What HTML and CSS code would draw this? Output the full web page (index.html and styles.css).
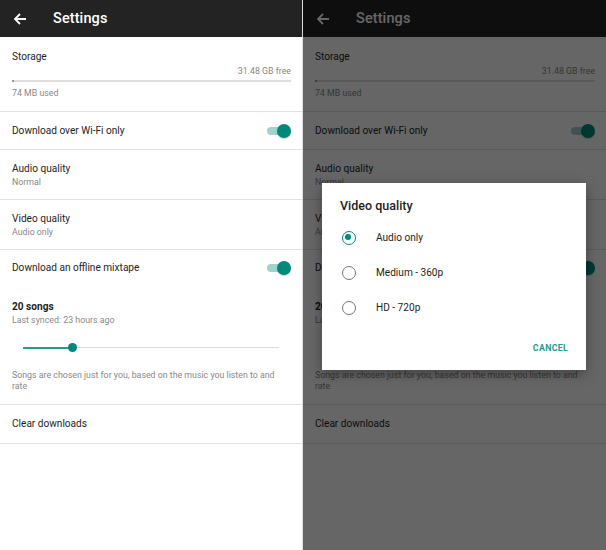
FILE: index.html
```html
<!DOCTYPE html>
<html>
<head>
<meta charset="utf-8">
<link rel="stylesheet" href="styles.css">
</head>
<body>
<div class="screens">
  <div class="phone phone-left">
    <div class="appbar">
      <svg class="back" width="16" height="16" viewBox="0 0 16 16"><path d="M14 8H3M8 3L3 8l5 5" fill="none" stroke="#fff" stroke-width="1.8"/></svg>
      <span class="appbar-title">Settings</span>
    </div>
    <div class="storage">
      <div class="title">Storage</div>
      <div class="free">31.48 GB free</div>
      <div class="bar"><div class="bar-fill"></div></div>
      <div class="sub">74 MB used</div>
    </div>
    <div class="row switch-row"><span class="title">Download over Wi-Fi only</span><span class="toggle"><span class="knob"></span></span></div>
    <div class="row two-line"><div class="title">Audio quality</div><div class="sub">Normal</div></div>
    <div class="row two-line"><div class="title">Video quality</div><div class="sub">Audio only</div></div>
    <div class="mixtape">
      <div class="switch-line"><span class="title">Download an offline mixtape</span><span class="toggle"><span class="knob"></span></span></div>
      <div class="songs">20 songs</div>
      <div class="sub">Last synced: 23 hours ago</div>
      <div class="slider"><div class="slider-fill"></div><div class="slider-thumb"></div></div>
      <div class="desc">Songs are chosen just for you, based on the music you listen to and rate</div>
    </div>
    <div class="row clear-row"><span class="title">Clear downloads</span></div>
  </div>
  <div class="phone phone-right">
    <div class="appbar">
      <svg class="back" width="16" height="16" viewBox="0 0 16 16"><path d="M14 8H3M8 3L3 8l5 5" fill="none" stroke="#fff" stroke-width="1.8"/></svg>
      <span class="appbar-title">Settings</span>
    </div>
    <div class="storage">
      <div class="title">Storage</div>
      <div class="free">31.48 GB free</div>
      <div class="bar"><div class="bar-fill"></div></div>
      <div class="sub">74 MB used</div>
    </div>
    <div class="row switch-row"><span class="title">Download over Wi-Fi only</span><span class="toggle"><span class="knob"></span></span></div>
    <div class="row two-line"><div class="title">Audio quality</div><div class="sub">Normal</div></div>
    <div class="row two-line"><div class="title">Video quality</div><div class="sub">Audio only</div></div>
    <div class="mixtape">
      <div class="switch-line"><span class="title">Download an offline mixtape</span><span class="toggle"><span class="knob"></span></span></div>
      <div class="songs">20 songs</div>
      <div class="sub">Last synced: 23 hours ago</div>
      <div class="slider"><div class="slider-fill"></div><div class="slider-thumb"></div></div>
      <div class="desc">Songs are chosen just for you, based on the music you listen to and rate</div>
    </div>
    <div class="row clear-row"><span class="title">Clear downloads</span></div>
    <div class="scrim"></div>
    <div class="dialog">
      <div class="dialog-title">Video quality</div>
      <div class="option"><span class="radio radio-on"></span><span>Audio only</span></div>
      <div class="option"><span class="radio"></span><span>Medium - 360p</span></div>
      <div class="option"><span class="radio"></span><span>HD - 720p</span></div>
      <div class="actions"><span class="cancel">CANCEL</span></div>
    </div>
  </div>
</div>
</body>
</html>
```
FILE: styles.css
```css
* { box-sizing: border-box; margin: 0; padding: 0; }
html, body { width: 606px; height: 550px; overflow: hidden; }
body { font-family: Roboto, "Noto Sans", sans-serif; background: #fff; color: #212121; }
.screens { display: flex; width: 606px; height: 550px; }
.phone { position: relative; width: 303px; height: 550px; background: #fff; overflow: hidden; }
.phone-left { border-right: 1px solid #dcdcdc; }
.appbar { height: 37px; background: #232323; display: flex; align-items: center; padding-left: 12px; }
.back { display: block; }
.appbar-title { color: #fff; font-size: 14.5px; font-weight: 500; margin-left: 25px; letter-spacing: 0.1px; }
.title { font-size: 10.1px; line-height: 14px; color: #1e1e1e; }
.sub { font-size: 8.8px; line-height: 12px; color: #888; }
.storage { padding: 13px 11px 11px 12px; border-bottom: 1px solid #e2e2e2; height: 75px; }
.free { font-size: 8.8px; line-height: 12px; color: #888; text-align: right; margin-top: 1px; }
.bar { height: 2px; background: #dedede; margin-top: 3px; }
.bar-fill { width: 2px; height: 2px; background: #999; }
.storage .sub { margin-top: 5px; }
.row { border-bottom: 1px solid #e2e2e2; padding: 0 11px 0 12px; }
.switch-row { height: 38px; display: flex; align-items: center; justify-content: space-between; }
.two-line { height: 50px; display: flex; flex-direction: column; justify-content: center; padding-top: 1px; }
.two-line .title { line-height: 14px; }
.toggle { position: relative; width: 25px; height: 14px; display: block; }
.toggle::before { content: ""; position: absolute; left: 1px; right: 2px; top: 3px; height: 8px; border-radius: 4px; background: #9fd3cc; }
.knob { position: absolute; right: 0; top: 0; width: 14px; height: 14px; border-radius: 50%; background: #00897b; box-shadow: 0 1px 1px rgba(0,0,0,0.2); }
.mixtape { height: 155px; border-bottom: 1px solid #e2e2e2; padding: 11px 11px 0 12px; }
.switch-line { display: flex; align-items: center; justify-content: space-between; height: 14px; }
.songs { font-size: 10.1px; font-weight: 700; line-height: 14px; margin-top: 25px; color: #1e1e1e; }
.mixtape .sub { margin-top: 0; }
.slider { position: relative; height: 9px; margin: 17px 12px 0 11px; }
.slider::before { content: ""; position: absolute; left: 0; right: 0; top: 4px; height: 1px; background: #dadada; }
.slider-fill { position: absolute; left: 0; width: 50px; top: 3.5px; height: 2px; background: #2a9a8c; }
.slider-thumb { position: absolute; left: 45px; top: 0; width: 9px; height: 9px; border-radius: 50%; background: #00897b; }
.desc { font-size: 8.8px; line-height: 11px; color: #888; margin-top: 18px; max-width: 268px; }
.clear-row { height: 39px; display: flex; align-items: center; }
.scrim { position: absolute; inset: 0; background: rgba(0,0,0,0.6); }
.dialog { position: absolute; left: 19px; top: 183px; width: 264px; height: 187px; background: #fff; box-shadow: 0 4px 12px rgba(0,0,0,0.35); padding: 15px 18px 0 20px; }
.dialog-title { font-size: 12.5px; font-weight: 500; line-height: 15px; color: #1e1e1e; margin-left: -2px; }
.option { display: flex; align-items: center; height: 35px; font-size: 10.1px; color: #1e1e1e; }
.dialog-title + .option { margin-top: 7px; }
.radio { width: 14px; height: 14px; border-radius: 50%; border: 1.6px solid #757575; margin-right: 20px; position: relative; flex: none; }
.radio-on { border-color: #00897b; }
.radio-on::after { content: ""; position: absolute; left: 2.4px; top: 2.4px; width: 6px; height: 6px; border-radius: 50%; background: #00897b; }
.actions { display: flex; justify-content: flex-end; margin-top: 18px; }
.cancel { font-size: 8.8px; font-weight: 700; color: #1d9d8f; letter-spacing: 0.3px; }
```
